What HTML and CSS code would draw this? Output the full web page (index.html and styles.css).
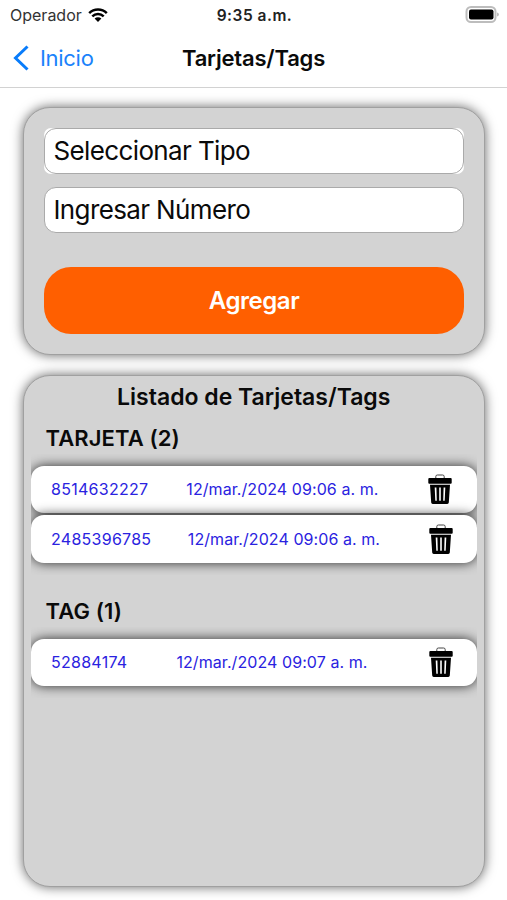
FILE: index.html
```html
<!DOCTYPE html>
<html lang="es">
<head>
    <meta charset="UTF-8">
    <meta name="viewport" content="width=device-width, initial-scale=1.0">
    <title>Tarjetas/Tags</title>
    <link rel="stylesheet" href="styles.css">
</head>
<body>
    <svg width="0" height="0" class="sprite">
        <symbol id="trash" viewBox="0 0 24 30">
            <path d="M7.8 4V2.6Q7.8 1 9.4 1h5.2q1.6 0 1.6 1.6V4" fill="none" stroke="#444" stroke-width="1"/>
            <rect x="0.3" y="4" width="23.4" height="5.8" rx="1"/>
            <path fill-rule="evenodd" d="M2 10.800h20l-1.200 17.800q-.1 1.400-1.500 1.400H4.700q-1.400 0-1.500-1.400zM6.700 13.500l.6 13.200h1.500l-.4-13.200zM11.200 13.500v13.200h1.600V13.500zM15.600 13.500l-.4 13.200h1.500l.6-13.200z"/>
        </symbol>
    </svg>

    <div class="status">
        <div class="operator">
            <span>Operador</span>
            <svg class="wifi" viewBox="0 0 20 14">
                <path d="M1.200 5.100a12.600 12.600 0 0 1 17.600 0M4.300 8.300a8.200 8.200 0 0 1 11.400 0" fill="none" stroke="#000" stroke-width="2.500"/>
                <path d="M6.600 10.600a4.900 4.900 0 0 1 6.800 0L10 14z"/>
            </svg>
        </div>
        <div class="time">9:35 a.m.</div>
        <svg class="battery" viewBox="0 0 34 17">
            <rect x="1.500" y="1" width="29" height="15" rx="4.500" fill="#fff" stroke="#bdbdbd" stroke-width="2"/>
            <rect x="4" y="3.500" width="24.500" height="10" rx="2"/>
            <path d="M32 6.500q2 .5 2 2t-2 2z" fill="#bdbdbd"/>
        </svg>
    </div>

    <div class="nav">
        <div class="back">
            <svg viewBox="0 0 16 26"><path d="M14.500 1.500L2.500 13 14.500 24.500" fill="none" stroke="#087cfb" stroke-width="3"/></svg>
            <span>Inicio</span>
        </div>
        <div class="title">Tarjetas/Tags</div>
    </div>

    <div class="card form">
        <div class="field select"><div class="box">Seleccionar Tipo</div></div>
        <div class="field"><div class="box">Ingresar Número</div></div>
        <div class="button">Agregar</div>
    </div>

    <div class="card list">
        <div class="list-title">Listado de Tarjetas/Tags</div>
        <div class="group">
            <div class="group-title">TARJETA (2)</div>
            <div class="rows">
                <div class="row">
                    <span class="number">8514632227</span>
                    <span>12/mar./2024 09:06 a. m.</span>
                    <svg class="trash"><use href="#trash"/></svg>
                </div>
                <div class="row">
                    <span class="number">2485396785</span>
                    <span>12/mar./2024 09:06 a. m.</span>
                    <svg class="trash"><use href="#trash"/></svg>
                </div>
            </div>
        </div>
        <div class="group">
            <div class="group-title">TAG (1)</div>
            <div class="rows">
                <div class="row">
                    <span class="number">52884174</span>
                    <span>12/mar./2024 09:07 a. m.</span>
                    <svg class="trash"><use href="#trash"/></svg>
                </div>
            </div>
        </div>
    </div>
</body>
</html>
```

FILE: styles.css
```css
* {
    box-sizing: border-box;
}
body {
    margin: 0;
    height: 900px;
    overflow: hidden;
    background-color: #fff;
    color: #0a0a0a;
    font-family: Inter, "Liberation Sans", sans-serif;
    white-space: nowrap;
}
svg {
    display: block;
}
.sprite {
    display: none;
}

/* status bar */
.status {
    display: grid;
    grid-template-columns: 1fr auto 1fr;
    align-items: center;
    height: 30px;
    padding: 0 8px 0 10px;
    font-size: 16px;
}
.operator {
    display: flex;
    align-items: center;
    gap: 6.5px;
    color: #333;
}
.wifi {
    width: 20px;
    height: 14px;
}
.time {
    font-weight: 600;
    font-size: 15.5px;
    letter-spacing: 0.5px;
    color: #222;
}
.battery {
    justify-self: end;
    width: 34px;
    height: 17px;
    margin-bottom: 2px;
}

/* navigation */
.nav {
    display: grid;
    grid-template-columns: 1fr auto 1fr;
    align-items: center;
    height: 58px;
    padding: 0 13px 2px;
    border-bottom: 1px solid #d2d2d2;
    font-size: 22px;
}
.back {
    display: flex;
    align-items: center;
    gap: 11px;
    color: #1a82fb;
    letter-spacing: -0.3px;
}
.back svg {
    width: 16px;
    height: 26px;
}
.title {
    font-weight: 600;
    letter-spacing: -0.2px;
}

/* cards */
.card {
    margin: 0 22.5px 0 23px;
    background-color: #d3d3d3;
    border: 1px solid #a0a0a0;
    border-radius: 27px;
    box-shadow: 0 0 12px rgba(0, 0, 0, 0.6);
}
.form {
    height: 248px;
    margin-top: 18.5px;
    padding: 20px 19.5px 20px 20px;
}
.field {
    height: 46px;
    margin-bottom: 13.5px;
    border-radius: 12px;
}
.select {
    background-color: #fff;
    border-radius: 7px;
}
.box {
    display: flex;
    align-items: center;
    height: 46px;
    padding-left: 8.5px;
    padding-bottom: 1px;
    background-color: #fff;
    border: 1px solid #aaa;
    border-radius: 12px;
    font-size: 26px;
    letter-spacing: -0.63px;
}
.button {
    display: flex;
    align-items: center;
    justify-content: center;
    height: 67px;
    margin-top: 33.5px;
    background-color: #ff5f00;
    border-radius: 27px;
    color: #fff;
    font-size: 24px;
    font-weight: 600;
    letter-spacing: -0.45px;
}

/* list */
.list {
    height: 512px;
    margin-top: 20.5px;
    padding: 4.5px 6.5px;
}
.list-title {
    height: 32px;
    line-height: 32px;
    text-align: center;
    font-size: 23px;
    font-weight: 600;
}
.group-title {
    height: 53px;
    padding: 10px 0 0 15px;
    line-height: 30px;
    font-size: 22px;
    font-weight: 600;
    letter-spacing: 0.1px;
}
.group + .group {
    margin-top: 11px;
}
.rows {
    overflow: hidden;
    margin-top: -12px;
    padding: 12px 0;
}
.row {
    display: flex;
    align-items: center;
    justify-content: space-between;
    height: 47.5px;
    padding: 0 24.5px 0 20.5px;
    background-color: #fff;
    border-radius: 13px;
    box-shadow: 0 0 12px rgba(0, 0, 0, 0.8);
    color: #2a22e0;
    font-size: 16px;
    letter-spacing: 0.07px;
}
.row + .row {
    margin-top: 2px;
}
.number {
    letter-spacing: 0.27px;
}
.trash {
    flex-shrink: 0;
    width: 24px;
    height: 30px;
    margin-left: 12px;
    fill: #000;
}
```
